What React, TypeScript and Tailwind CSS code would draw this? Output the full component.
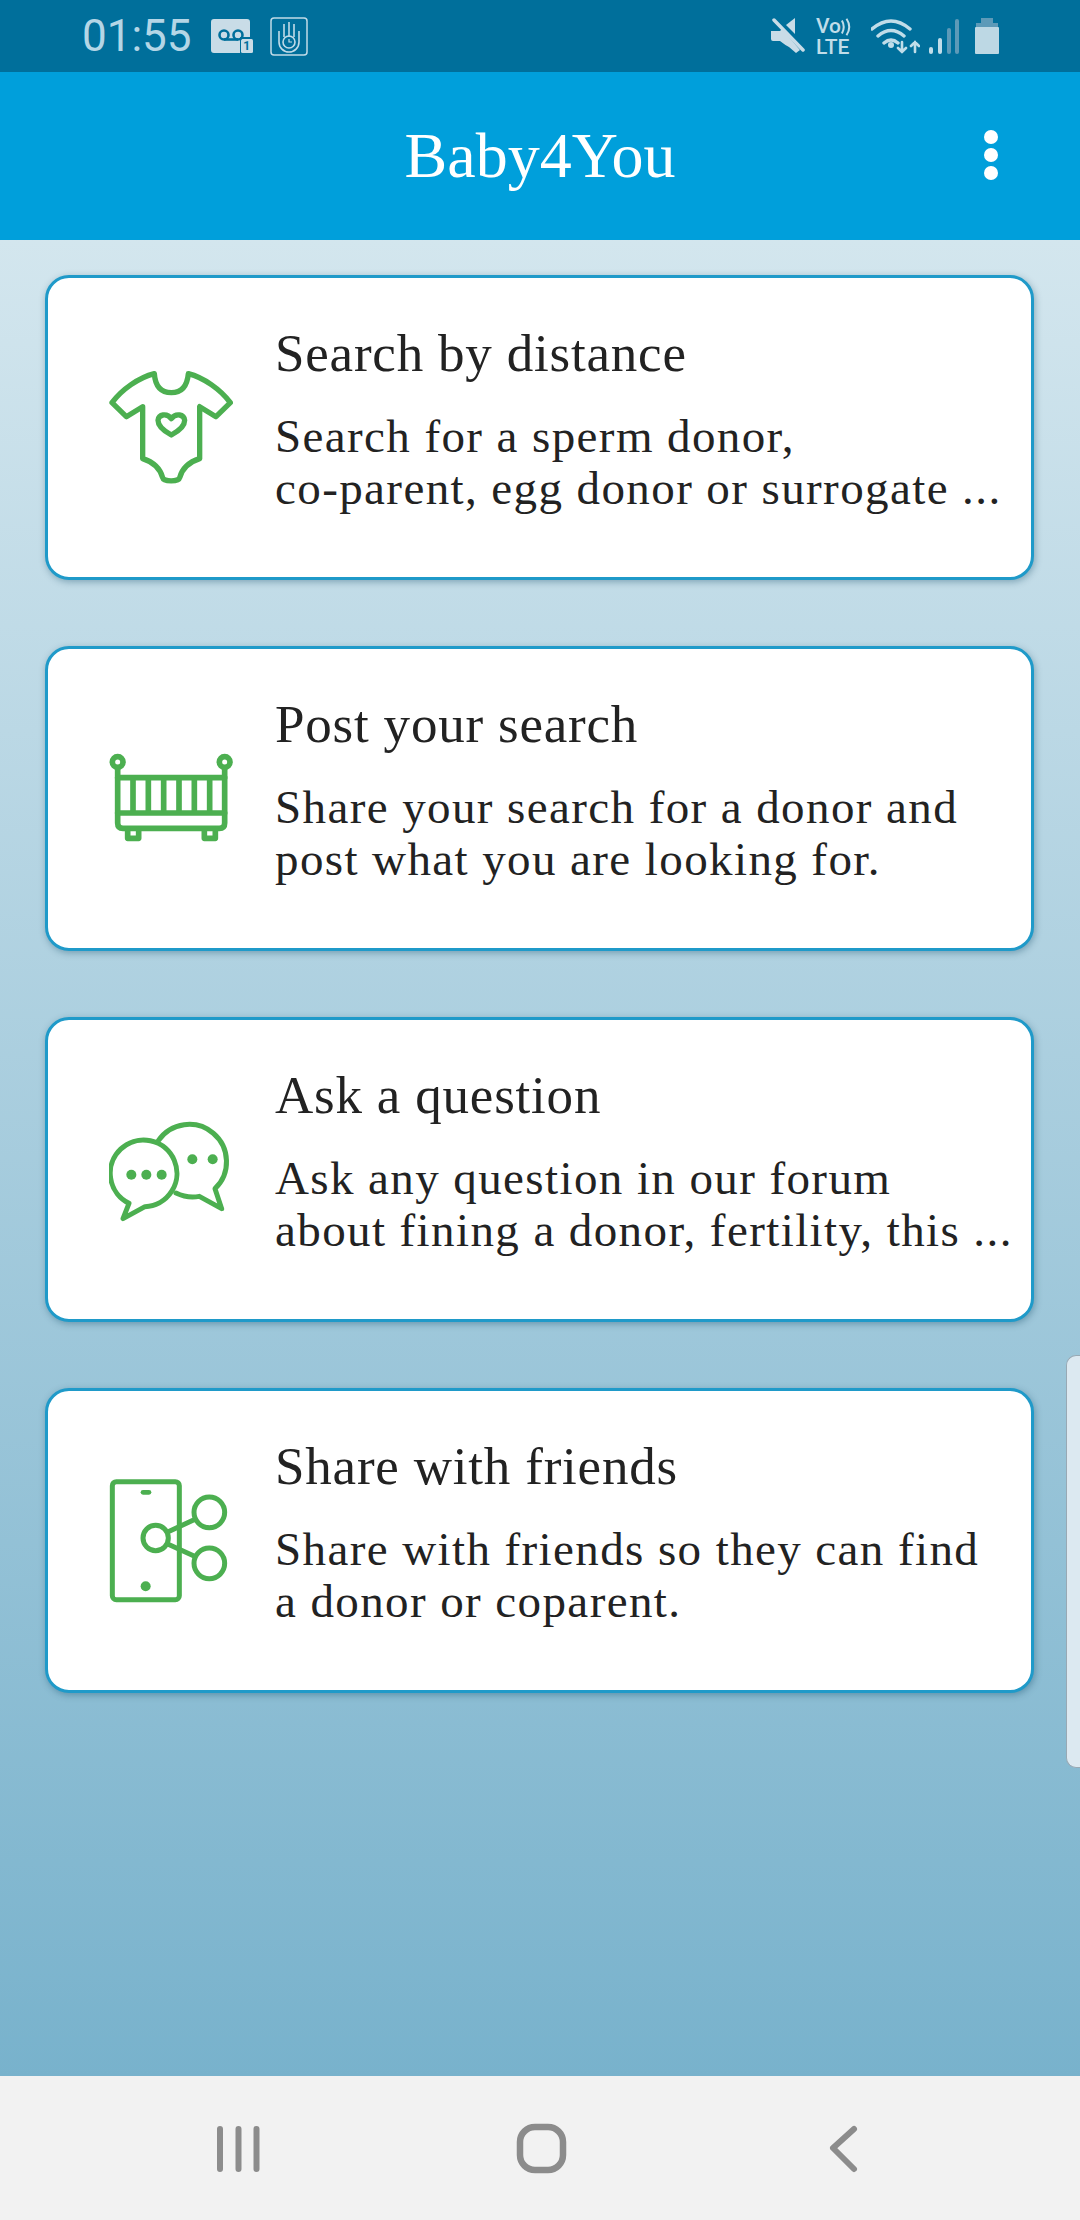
import React from "react";

const green = "#4caf50";

function Onesie() {
  return (
    <svg width="124" height="116" viewBox="236 332 372 348" fill="none" stroke={green} strokeWidth="16" strokeLinejoin="round" strokeLinecap="round">
      <path d="M372 343C375 385 395 400 423 400C451 400 470 385 474 343C520 355 570 390 600 430L557 472L508 442L508 598C470 610 455 630 448 655C445 668 400 668 397 655C390 630 375 610 337 598L337 442L288 472L245 430C275 390 325 355 372 343Z" />
      <path d="M423 527C400 515 383 500 383 483C383 465 410 460 423 478C436 460 463 465 463 483C463 500 446 515 423 527Z" />
    </svg>
  );
}

function Crib() {
  return (
    <svg width="124" height="92" viewBox="236 350 372 276" fill="none" stroke={green} strokeWidth="17" strokeLinejoin="round" strokeLinecap="round">
      <circle cx="262" cy="377" r="16" />
      <circle cx="583" cy="377" r="16" />
      <path d="M262 395V560Q262 576 278 576H567Q583 576 583 560V395" />
      <path d="M262 424H583M262 530H583M308 424V530M354 424V530M400 424V530M446 424V530M492 424V530M538 424V530" />
      <path d="M292 578V606H325V578M522 578V606H555V578" />
    </svg>
  );
}

function Chat() {
  return (
    <svg width="124" height="104" viewBox="234 310 372 312" fill="none" stroke={green} strokeWidth="15" strokeLinejoin="round" strokeLinecap="round">
      <path d="M342 576L276 612L294 566A100 100 0 1 1 342 576Z" />
      <path d="M382 378A112 112 0 1 1 552 522L572 582L505 545Q470 552 435 535" />
      <g fill={green} stroke="none">
        <circle cx="301" cy="480" r="15" />
        <circle cx="346" cy="480" r="15" />
        <circle cx="392" cy="480" r="15" />
        <circle cx="484" cy="434" r="15" />
        <circle cx="545" cy="434" r="15" />
      </g>
    </svg>
  );
}

function PhoneShare() {
  return (
    <svg width="124" height="124" viewBox="236 298 372 372" fill="none" stroke={green} strokeWidth="15" strokeLinejoin="round" strokeLinecap="round">
      <rect x="246" y="306" width="201" height="354" rx="12" />
      <path d="M338 338H356" strokeWidth="14" />
      <circle cx="346" cy="620" r="15" fill={green} stroke="none" />
      <path d="M412 457L496 418M412 493L496 531" />
      <circle cx="376" cy="475" r="38" fill="#fff" />
      <circle cx="537" cy="398" r="46" fill="#fff" />
      <circle cx="537" cy="551" r="46" fill="#fff" />
    </svg>
  );
}

const cards = [
  { icon: <Onesie />, title: "Search by distance", lines: ["Search for a sperm donor,", "co-parent, egg donor or surrogate ..."] },
  { icon: <Crib />, title: "Post your search", lines: ["Share your search for a donor and", "post what you are looking for."] },
  { icon: <Chat />, title: "Ask a question", lines: ["Ask any question in our forum", "about fining a donor, fertility, this ..."] },
  { icon: <PhoneShare />, title: "Share with friends", lines: ["Share with friends so they can find", "a donor or coparent."] },
];

function StatusLeft() {
  return (
    <div className="flex items-center">
      <span className="text-[44px] leading-none text-[#b4d6e6]" style={{ fontFamily: "Roboto, sans-serif" }}>01:55</span>
      <div className="relative ml-[19px] h-[34px] w-[42px]">
        <svg width="42" height="34" viewBox="0 0 42 34" className="absolute inset-0">
          <path d="M3 0H36Q39 0 39 3V18H29V34H3Q0 34 0 31V3Q0 0 3 0Z" fill="#c9dce7" />
          <rect x="30" y="20" width="12" height="14" rx="1.5" fill="#c9dce7" />
          <circle cx="13" cy="16" r="4.5" fill="none" stroke="#006f9b" strokeWidth="2.6" />
          <circle cx="27" cy="16" r="4.5" fill="none" stroke="#006f9b" strokeWidth="2.6" />
          <path d="M13 20.5H27" stroke="#006f9b" strokeWidth="2.6" />
        </svg>
        <span className="absolute left-[30px] top-[20px] w-[12px] text-center text-[12px] font-bold leading-[14px] text-[#006f9b]" style={{ fontFamily: "Roboto, sans-serif" }}>1</span>
      </div>
      <svg width="38" height="39" viewBox="0 0 38 39" className="ml-[17px]" fill="none" stroke="#c0dbe8">
        <rect x="1" y="1" width="36" height="37" rx="3" strokeWidth="1.5" />
        <path d="M19 5V20M14 7V20M24 7V20M9 14V25A10 10 0 0 0 29 25V14" strokeWidth="1.6" />
        <circle cx="19" cy="25" r="6" strokeWidth="1.6" />
        <path d="M19 22V25H22" strokeWidth="1.2" />
      </svg>
    </div>
  );
}

function StatusRight() {
  return (
    <div className="flex items-center">
      <svg width="34" height="38" viewBox="0 0 34 38">
        <path d="M0 14H9L11 12L29 33L25 36L18 30Q14 28 9 24H2Q0 24 0 22Z" fill="#c9dce7" />
        <path d="M15 8L24 1V17Z" fill="#c9dce7" />
        <path d="M3 3L32 34" stroke="#006f9b" strokeWidth="1" />
        <path d="M3 3L32 33" stroke="#c9dce7" strokeWidth="3.5" strokeLinecap="round" />
      </svg>
      <div className="ml-[11px] flex w-[36px] flex-col leading-none text-[#c0dde9] font-medium" style={{ fontFamily: "Roboto, sans-serif" }}>
        <div className="flex h-[19px] items-center text-[21px]">
          <span>Vo</span>
          <svg width="12" height="18" viewBox="0 0 12 18" fill="none" stroke="#c0dde9" strokeWidth="2.2"><path d="M1 2Q5 9 1 16M6 0Q12 9 6 18" /></svg>
        </div>
        <div className="mt-[1px] h-[18px] text-[21px]">LTE</div>
      </div>
      <svg width="49" height="36" viewBox="0 0 49 36" className="ml-[19px]" fill="none" stroke="#c0dde9" strokeWidth="3.4" strokeLinecap="round">
        <path d="M1 11Q20 -5 39 11M7 18Q20 7 33 18M13 25Q20 19 27 25" />
        <circle cx="20" cy="27" r="3" fill="#c0dde9" stroke="none" />
        <path d="M31 24V34M27 30L31 34L35 30M44 34V24M40 28L44 24L48 28" strokeWidth="2.6" />
      </svg>
      <svg width="32" height="36" viewBox="0 0 32 36" className="ml-[8px]" strokeWidth="4" strokeLinecap="round" fill="none">
        <path d="M3 31V34" stroke="#c0dde9" />
        <path d="M12 22V34" stroke="#c0dde9" />
        <path d="M21 12V34" stroke="#5d9ab8" />
        <path d="M29 3V34" stroke="#5d9ab8" />
      </svg>
      <svg width="24" height="36" viewBox="0 0 24 36" className="ml-[15px]">
        <rect x="6" y="0" width="12" height="6" fill="#5d9ab8" />
        <path d="M1 5H23V9H1Z" fill="#5d9ab8" />
        <rect x="0" y="9" width="24" height="27" rx="1" fill="#bdd8e4" />
      </svg>
    </div>
  );
}

export default function App() {
  return (
    <div className="relative flex h-[2220px] w-[1080px] flex-col overflow-hidden" style={{ fontFamily: '"Liberation Serif", serif' }}>
      <div className="flex h-[72px] shrink-0 items-center justify-between bg-[#006f9b] pl-[82px] pr-[81px]">
        <StatusLeft />
        <StatusRight />
      </div>
      <div className="relative flex h-[168px] shrink-0 items-center justify-center bg-[#009fdb]">
        <span className="text-[64px] leading-none text-white">Baby4You</span>
        <div className="absolute right-[82px] top-[58px] flex flex-col gap-[4px]">
          <div className="h-[14px] w-[14px] rounded-full bg-white" />
          <div className="h-[14px] w-[14px] rounded-full bg-white" />
          <div className="h-[14px] w-[14px] rounded-full bg-white" />
        </div>
      </div>
      <div className="flex flex-1 flex-col gap-[66px] bg-gradient-to-b from-[#d3e6ee] to-[#78b2cc] pl-[45px] pt-[35px]">
        {cards.map((c) => (
          <div key={c.title} className="flex h-[305px] w-[989px] items-center rounded-[24px] border-[3px] border-[#1f9ac9] bg-white pl-[61px] shadow-[1px_2px_7px_rgba(0,60,90,0.35)]">
            <div className="flex w-[124px] shrink-0 justify-center">{c.icon}</div>
            <div className="ml-[42px] whitespace-nowrap pb-[16px] text-[#222]">
              <div className="text-[53px] leading-[56px] tracking-[0.8px]">{c.title}</div>
              <div className="mt-[29px] text-[47px] leading-[52px] tracking-[1.4px]">
                {c.lines.map((l) => (
                  <div key={l}>{l}</div>
                ))}
              </div>
            </div>
          </div>
        ))}
      </div>
      <div className="flex h-[144px] shrink-0 items-center bg-[#f2f2f2]">
        <svg width="1080" height="144" viewBox="0 0 1080 144" fill="none" stroke="#8c8c8c" strokeWidth="6" strokeLinecap="round" strokeLinejoin="round">
          <path d="M220 53V93M238.500 53V93M256.500 53V93" />
          <rect x="520" y="51" width="43" height="43" rx="15" strokeWidth="6.500" />
          <path d="M854 53L833 72L854 93" />
        </svg>
      </div>
      <div className="absolute left-[1066px] top-[1355px] h-[413px] w-[14px] rounded-l-[10px] border-y border-l border-[#98a9b4] bg-[#dce9f1]" />
    </div>
  );
}
